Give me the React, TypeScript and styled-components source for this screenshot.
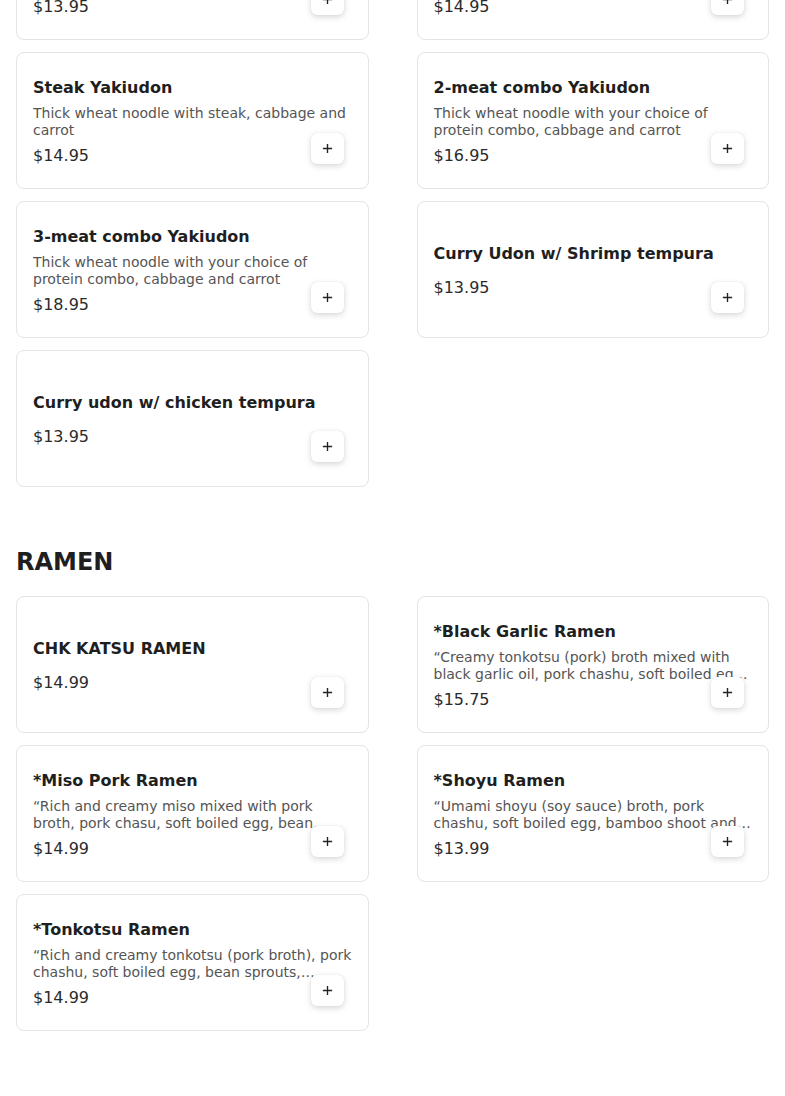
import React from "react";
import styled, { createGlobalStyle } from "styled-components";

const GlobalStyle = createGlobalStyle`
    html, body {
        margin: 0;
        padding: 0;
        background: #ffffff;
    }
    body {
        font-family: "DejaVu Sans", "Noto Sans", sans-serif;
        color: #1f1f1f;
        overflow: hidden;
    }
`;

interface IMenuItem {
    name: string;
    description?: string;
    price: string;
}

interface ISection {
    title?: string;
    items: IMenuItem[];
}

const udon: ISection = {
    items: [
        { name: "Chicken Yakiudon", description: "Thick wheat noodle with chicken, cabbage and carrot", price: "$13.95" },
        { name: "Beef Yakiudon", description: "Thick wheat noodle with beef, cabbage and carrot", price: "$14.95" },
        { name: "Steak Yakiudon", description: "Thick wheat noodle with steak, cabbage and carrot", price: "$14.95" },
        { name: "2-meat combo Yakiudon", description: "Thick wheat noodle with your choice of protein combo, cabbage and carrot", price: "$16.95" },
        { name: "3-meat combo Yakiudon", description: "Thick wheat noodle with your choice of protein combo, cabbage and carrot", price: "$18.95" },
        { name: "Curry Udon w/ Shrimp tempura", price: "$13.95" },
        { name: "Curry udon w/ chicken tempura", price: "$13.95" },
    ],
};

const ramen: ISection = {
    title: "RAMEN",
    items: [
        { name: "CHK KATSU RAMEN", price: "$14.99" },
        { name: "*Black Garlic Ramen", description: "\u201cCreamy tonkotsu (pork) broth mixed with black garlic oil, pork chashu, soft boiled egg, bean sprouts, green onion and kikurage mushroom", price: "$15.75" },
        { name: "*Miso Pork Ramen", description: "\u201cRich and creamy miso mixed with pork broth, pork chasu, soft boiled egg, bean sprouts, corn and green onion", price: "$14.99" },
        { name: "*Shoyu Ramen", description: "\u201cUmami shoyu (soy sauce) broth, pork chashu, soft boiled egg, bamboo shoot and green onion", price: "$13.99" },
        { name: "*Tonkotsu Ramen", description: "\u201cRich and creamy tonkotsu (pork broth), pork chashu, soft boiled egg, bean sprouts, kikurage mushroom and green onion", price: "$14.99" },
    ],
};

const Page = styled.main`
    padding: 0 16px;
    margin-top: -97px;
`;

const Section = styled.section`
    display: flex;
    flex-direction: column;
`;

const SectionTitle = styled.h2`
    margin: 61px 0 20px;
    font-size: 24px;
    line-height: 28px;
    font-weight: 700;
    color: #1f1f1f;
`;

const Grid = styled.div`
    display: grid;
    grid-template-columns: 1fr 1fr;
    column-gap: 48px;
    row-gap: 12px;
`;

const Card = styled.div`
    position: relative;
    box-sizing: border-box;
    height: 137px;
    padding: 0 16px;
    border: 1px solid #e4e4e4;
    border-radius: 8px;
    background: #fff;
    display: flex;
    flex-direction: column;
    justify-content: center;
`;

const ItemName = styled.div`
    font-size: 16px;
    line-height: 19px;
    font-weight: 700;
    color: #1f1f1f;
    margin-bottom: 8px;
`;

const ItemDescription = styled.div`
    font-size: 14px;
    line-height: 17px;
    color: #555;
    margin-bottom: 8px;
    display: -webkit-box;
    -webkit-line-clamp: 2;
    -webkit-box-orient: vertical;
    overflow: hidden;
`;

const ItemPrice = styled.div`
    font-size: 16px;
    line-height: 17px;
    color: #2b2b2b;
`;

const AddButton = styled.button`
    position: absolute;
    right: 24px;
    bottom: 24px;
    width: 33px;
    height: 31px;
    padding: 0;
    border: none;
    border-radius: 6px;
    background: #fff;
    box-shadow: 0 2px 6px rgba(0, 0, 0, 0.16), 0 0 1px rgba(0, 0, 0, 0.12);
    display: flex;
    align-items: center;
    justify-content: center;
    color: #222;
    cursor: pointer;
`;

const PlusIcon = () => (
    <svg width="11" height="11" viewBox="0 0 12 12" fill="none">
        <path d="M6 1v10M1 6h10" stroke="currentColor" strokeWidth="1.5" />
    </svg>
);

const MenuCard = ({ name, description, price }: IMenuItem) => (
    <Card>
        <ItemName>{name}</ItemName>
        <ItemDescription>{description}</ItemDescription>
        <ItemPrice>{price}</ItemPrice>
        <AddButton aria-label={`Add ${name}`}>
            <PlusIcon />
        </AddButton>
    </Card>
);

const MenuSection = ({ title, items }: ISection) => (
    <Section>
        {title && <SectionTitle>{title}</SectionTitle>}
        <Grid>
            {items.map(item => <MenuCard key={item.name} {...item} />)}
        </Grid>
    </Section>
);

export default function App() {
    return (
        <>
            <GlobalStyle />
            <Page>
                <MenuSection {...udon} />
                <MenuSection {...ramen} />
            </Page>
        </>
    );
}
